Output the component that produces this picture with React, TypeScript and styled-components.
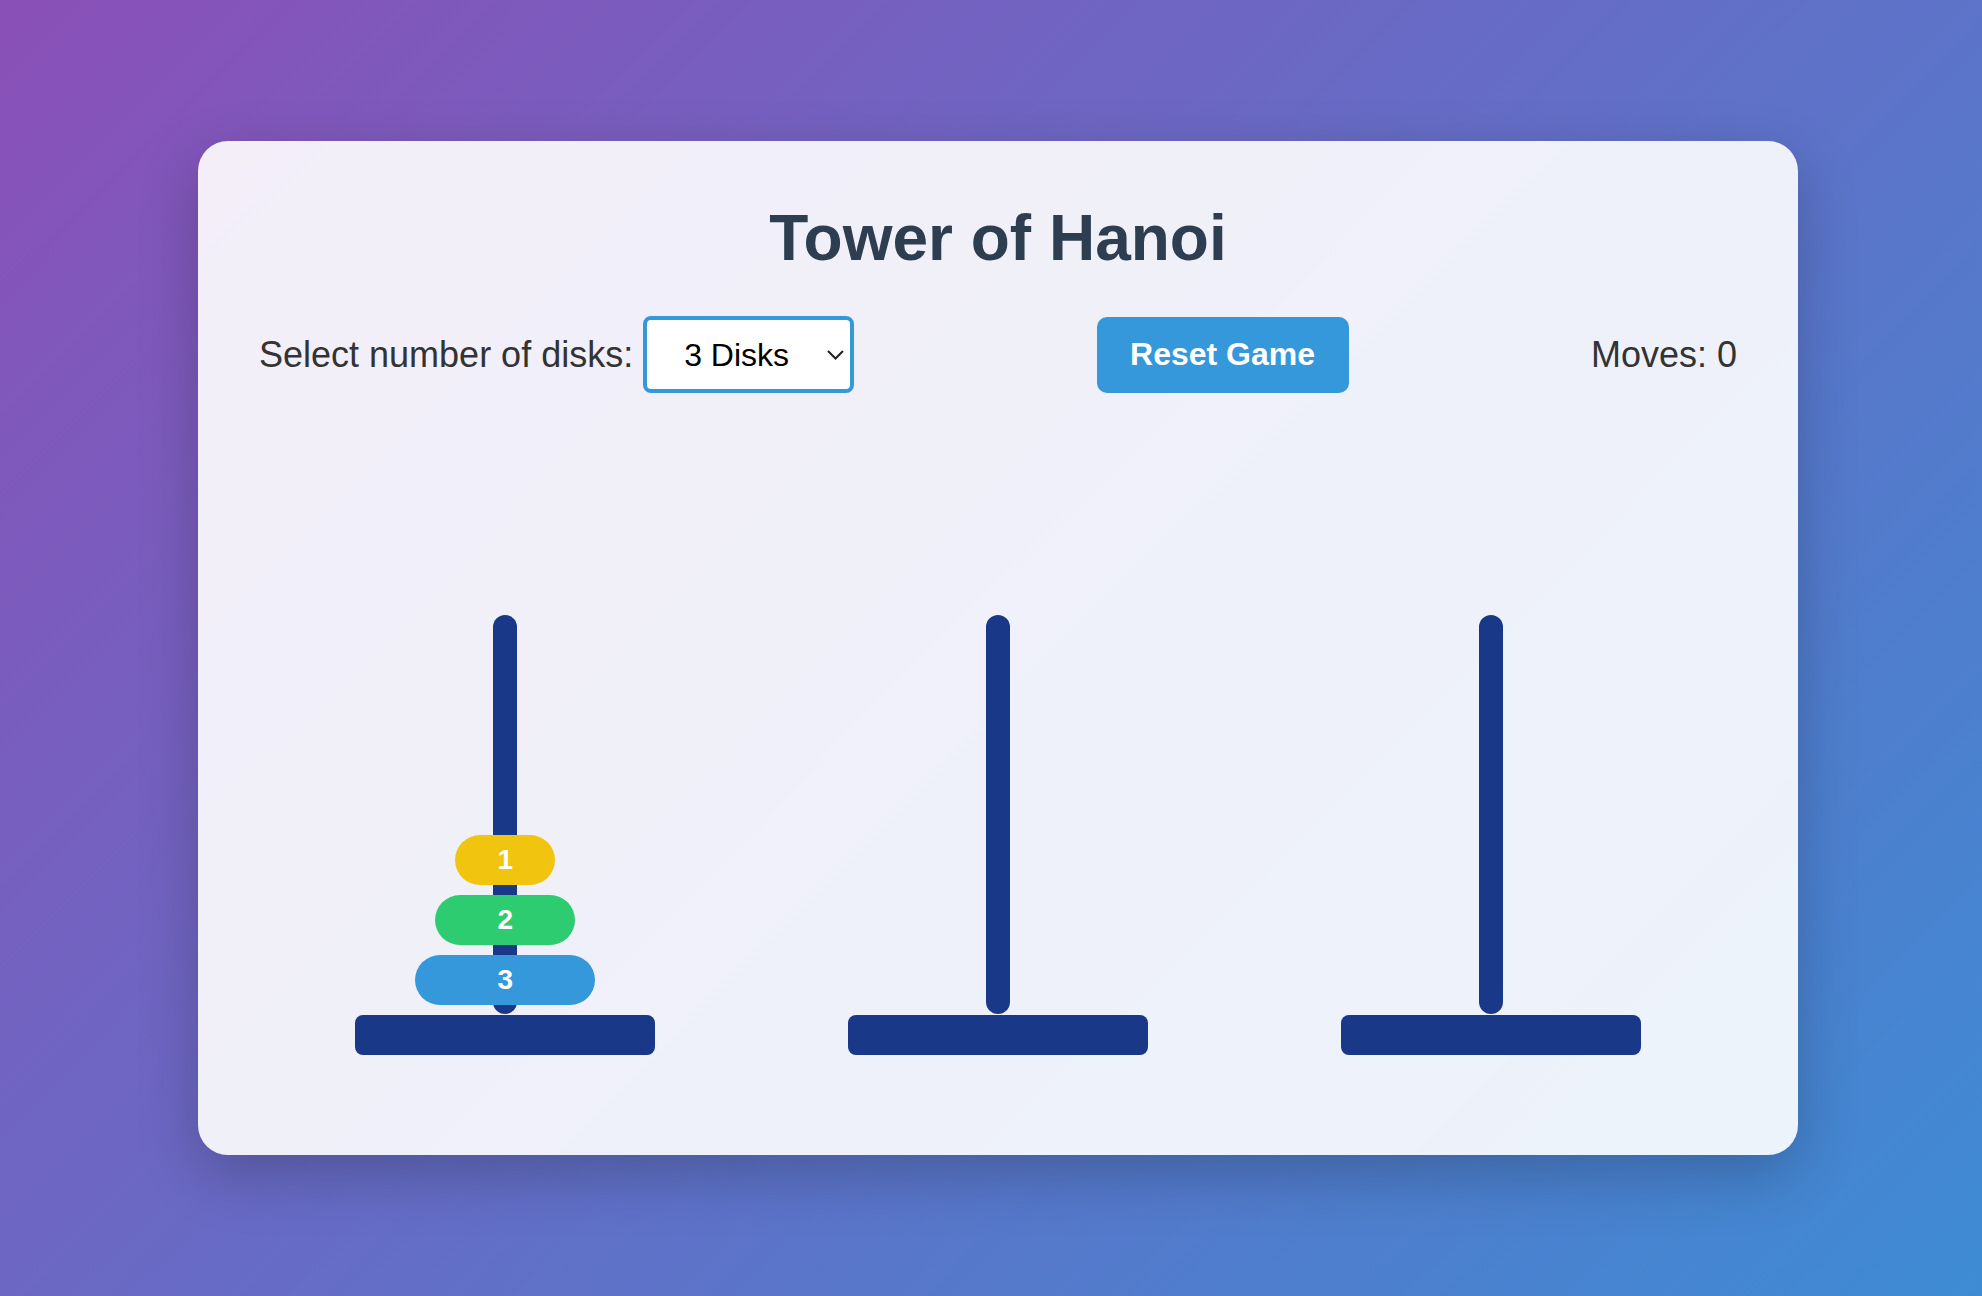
import React, { useState } from 'react';
import styled, { createGlobalStyle } from 'styled-components';

const GlobalStyle = createGlobalStyle`
    html, body {
        margin: 0;
        padding: 0;
    }
    body {
        min-height: 100vh;
        font-family: "Liberation Sans", Arial, Helvetica, sans-serif;
        background: linear-gradient(135deg, #8a50b8 0%, #3e8bd4 100%);
    }
`;

const Page = styled.div`
    min-height: 100vh;
    display: flex;
    justify-content: center;
    align-items: center;
`;

const Card = styled.div`
    width: 1600px;
    box-sizing: border-box;
    margin-left: 14px;
    padding: 65px 61px 100px;
    background: rgba(255, 255, 255, 0.9);
    border-radius: 30px;
    box-shadow: 0 20px 60px rgba(0, 0, 0, 0.22);
`;

const Title = styled.h1`
    margin: 0;
    height: 64px;
    line-height: 64px;
    font-size: 64px;
    font-weight: 700;
    color: #2c3e50;
    text-align: center;
`;

const Controls = styled.div`
    margin-top: 46px;
    display: flex;
    justify-content: space-between;
    align-items: center;
`;

const ControlGroup = styled.div`
    display: flex;
    align-items: center;
    gap: 10px;
`;

const Label = styled.label`
    font-size: 36px;
    color: #333;
`;

const SelectWrap = styled.div`
    position: relative;
    width: 211px;
    height: 77px;
`;

const Select = styled.select`
    appearance: none;
    width: 100%;
    height: 100%;
    box-sizing: border-box;
    padding: 0 0 0 37px;
    border: 4px solid #3498db;
    border-radius: 8px;
    background: #fff;
    font-family: inherit;
    font-size: 32px;
    color: #000;
    outline: none;
`;

const Chevron = styled.svg`
    position: absolute;
    right: 10px;
    top: 34px;
    pointer-events: none;
`;

const ResetButton = styled.button`
    width: 252px;
    height: 76px;
    border: none;
    border-radius: 10px;
    background: #3498db;
    color: #fff;
    font-family: inherit;
    font-size: 32px;
    font-weight: 700;
    cursor: pointer;
`;

const Moves = styled.div`
    font-size: 36px;
    color: #333;
`;

const Towers = styled.div`
    margin-top: 222px;
    display: flex;
`;

const Tower = styled.div`
    flex: 1;
    display: flex;
    flex-direction: column;
    align-items: center;
`;

const PoleArea = styled.div`
    position: relative;
    width: 300px;
    height: 400px;
    box-sizing: border-box;
    padding-bottom: 10px;
    display: flex;
    flex-direction: column;
    justify-content: flex-end;
    align-items: center;
    gap: 10px;

    &::before {
        content: '';
        position: absolute;
        left: 138px;
        top: 0;
        width: 24px;
        height: 399px;
        border-radius: 12px;
        background: #1a3888;
    }
`;

const Disk = styled.div<{ $size: number; $color: string }>`
    position: relative;
    width: ${(p) => 60 + p.$size * 40}px;
    height: 50px;
    border-radius: 25px;
    background: ${(p) => p.$color};
    display: flex;
    justify-content: center;
    align-items: center;
    color: #fff;
    font-size: 28px;
    font-weight: 700;
`;

const Base = styled.div`
    width: 300px;
    height: 40px;
    border-radius: 8px;
    background: #1a3888;
`;

const diskColors = ['#f1c40f', '#2ecc71', '#3498db', '#e74c3c', '#9b59b6', '#e67e22', '#1abc9c', '#34495e'];

const App = () => {
    const [count, setCount] = useState(3);
    const [towers, setTowers] = useState<number[][]>([[1, 2, 3], [], []]);
    const [moves, setMoves] = useState(0);

    const reset = (n: number) => {
        setTowers([Array.from({ length: n }, (_, i) => i + 1), [], []]);
        setMoves(0);
    };

    return (
        <Page>
            <GlobalStyle />
            <Card>
                <Title>Tower of Hanoi</Title>
                <Controls>
                    <ControlGroup>
                        <Label htmlFor="disks">Select number of disks:</Label>
                        <SelectWrap>
                            <Select
                                id="disks"
                                value={count}
                                onChange={(e) => {
                                    const n = Number(e.target.value);
                                    setCount(n);
                                    reset(n);
                                }}
                            >
                                {[3, 4, 5, 6, 7, 8].map((n) => (
                                    <option key={n} value={n}>{n} Disks</option>
                                ))}
                            </Select>
                            <Chevron width="17" height="10" viewBox="0 0 17 10">
                                <path d="M1 1 L8.5 8.5 L16 1" fill="none" stroke="#222" strokeWidth="2" />
                            </Chevron>
                        </SelectWrap>
                    </ControlGroup>
                    <ResetButton onClick={() => reset(count)}>Reset Game</ResetButton>
                    <Moves>Moves: {moves}</Moves>
                </Controls>
                <Towers>
                    {towers.map((disks, i) => (
                        <Tower key={i}>
                            <PoleArea>
                                {disks.map((d) => (
                                    <Disk key={d} $size={d} $color={diskColors[d - 1]}>{d}</Disk>
                                ))}
                            </PoleArea>
                            <Base />
                        </Tower>
                    ))}
                </Towers>
            </Card>
        </Page>
    );
};

export default App;
